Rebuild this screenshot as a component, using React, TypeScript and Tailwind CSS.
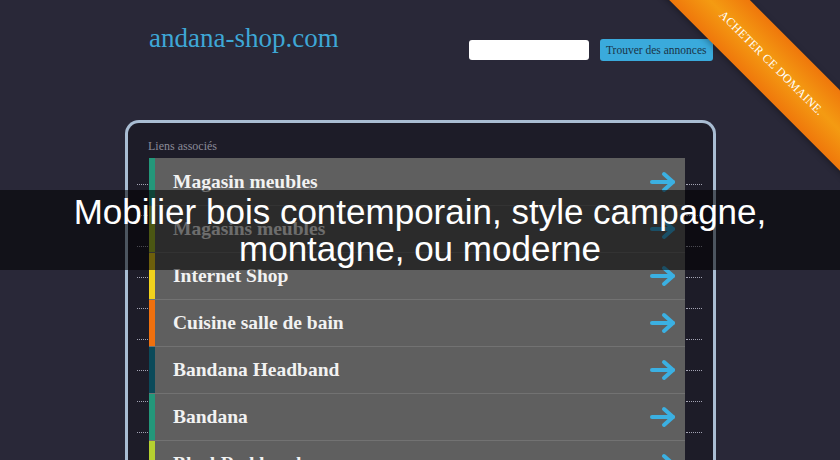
const links = [
  { label: "Magasin meubles", bar: "bg-[#23977a]" },
  { label: "Magasins meubles", bar: "bg-[#a6bf2c]" },
  { label: "Internet Shop", bar: "bg-[#f2d21c]" },
  { label: "Cuisine salle de bain", bar: "bg-[#f0700e]" },
  { label: "Bandana Headband", bar: "bg-[#0b4a5a]" },
  { label: "Bandana", bar: "bg-[#23977a]" },
  { label: "BlackRed bandana", bar: "bg-[#b5d030]" },
];

function Arrow() {
  return (
    <svg width="28" height="22" viewBox="0 0 28 22" fill="none" stroke="#3bb0e2" strokeWidth="4" strokeLinecap="round" strokeLinejoin="round">
      <path d="M3 11h21" />
      <path d="M15 3l9 8-9 8" />
    </svg>
  );
}

function Gutter({ width }: { width: string }) {
  return (
    <div className={`${width} -mt-[4px] flex flex-col shrink-0`}>
      {Array.from({ length: 10 }).map((_, i) => (
        <div key={i} className="h-[31px] border-b border-dotted border-[#a4a4b4]" />
      ))}
    </div>
  );
}

export default function App() {
  return (
    <div className="relative w-[840px] h-[460px] overflow-hidden bg-[#292838]" style={{ fontFamily: '"Liberation Serif", serif' }}>
      <header className="flex items-start">
        <div className="pl-[149px] pt-[23px] w-[469px] text-[27px] leading-[30px] text-[#3ea7d6]">andana-shop.com</div>
        <div className="flex items-center gap-[11px] pt-[39px]">
          <div className="w-[120px] h-[20px] rounded-[3px] bg-white" />
          <div className="h-[22px] px-[6px] rounded-[3px] bg-[#3aaadc] text-[11.5px] leading-[22px] text-[#1b3447]">Trouver des annonces</div>
        </div>
      </header>

      <section className="ml-[125px] mt-[59px] w-[591px] h-[400px] border-[3px] border-b-0 border-[#a9bdd3] rounded-t-[14px] bg-[#1d1c28]">
        <div className="pl-[20px] pt-[14px] h-[35px] text-[12px] text-[#8b8b98]">Liens associés</div>
        <div className="flex pl-[9px] gap-[1px]">
          <Gutter width="w-[11px]" />
          <div className="w-[536px] flex flex-col">
            {links.map((l, i) => (
              <div key={i} className={`flex h-[47px] bg-[#5f5f5f] ${i > 0 ? "border-t border-[#727272]" : ""}`}>
                <div className={`w-[6px] ${l.bar}`} />
                <div className="flex-1 flex items-center pl-[18px] pr-[8px]">
                  <span className="flex-1 text-[19.5px] font-bold text-[#f2f2f2]">{l.label}</span>
                  <Arrow />
                </div>
              </div>
            ))}
          </div>
          <Gutter width="w-[16px]" />
        </div>
      </section>

      <div className="absolute left-0 right-0 top-[190px] h-[80px] bg-black/55 pt-[3px]">
        <p className="mx-auto max-w-[720px] text-center text-white text-[35px] leading-[37px]" style={{ fontFamily: '"Liberation Sans", Arial, sans-serif' }}>
          Mobilier bois contemporain, style campagne, montagne, ou moderne
        </p>
      </div>

      <div className="absolute left-[622px] top-[34px] w-[300px] h-[57px] rotate-45 bg-gradient-to-b from-[#ef770b] via-[#f49b12] to-[#ef770b] flex items-center justify-center shadow-[0_2px_6px_rgba(0,0,0,0.3)]">
        <span className="text-[12px] text-white tracking-[0.3px]">ACHETER CE DOMAINE.</span>
      </div>
    </div>
  );
}
